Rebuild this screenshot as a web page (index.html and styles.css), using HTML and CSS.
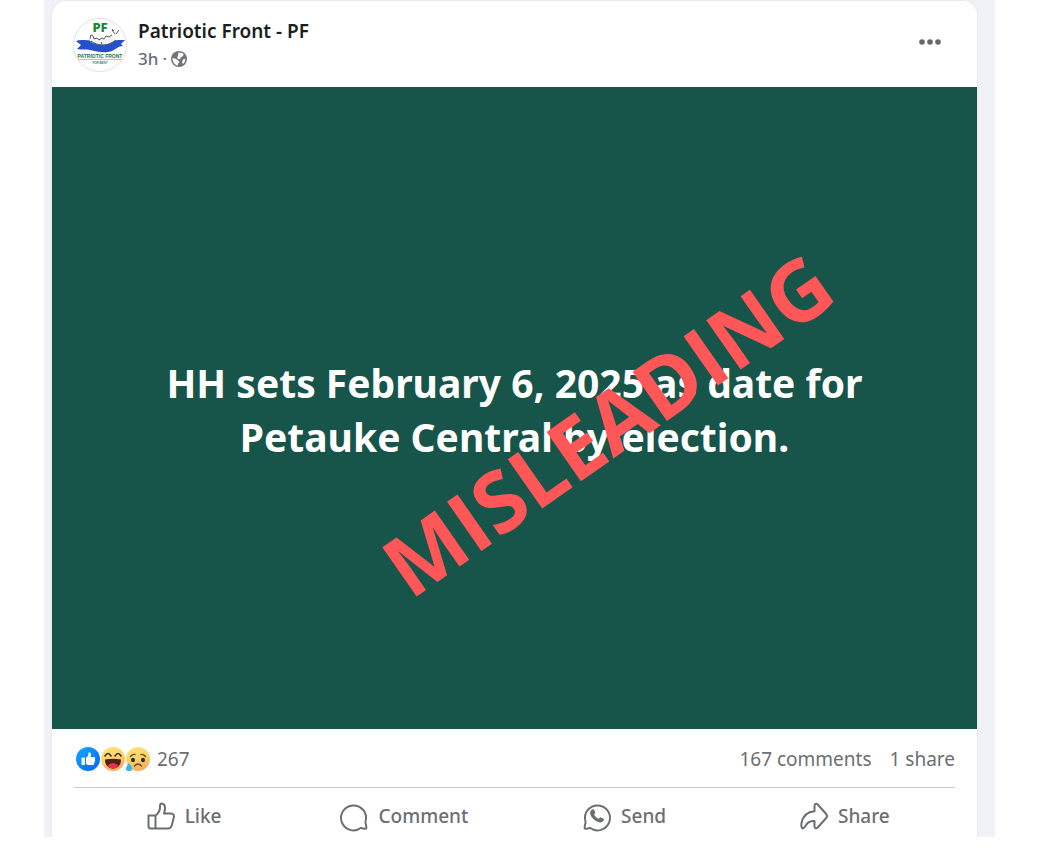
FILE: index.html
```html
<!DOCTYPE html>
<html lang="en">
<head>
<meta charset="utf-8">
<meta name="viewport" content="width=device-width, initial-scale=1">
<title>Patriotic Front - PF</title>
<link rel="stylesheet" href="styles.css">
</head>
<body>
<main class="feed">
  <article class="post">
    <header class="post-header">
      <svg class="avatar" viewBox="0 0 54 54" role="img" aria-label="Patriotic Front logo">
        <circle cx="27" cy="27" r="26.500" fill="#fff" stroke="#dedfe2"/>
        <text x="27" y="14" text-anchor="middle" class="logo-initials">PF</text>
        <path d="M3 23c5-2 10 0 15-1s10 2 17 1 10-1 17-1l-4 4 2 2c-6 0-8 5-15 6-8 1-12-1-18-2-4-1-8 0-13-1l4-4z" fill="#2450cc"/>
        <path d="M16 22c5 6 20 7 27-1l-3-3-7 3H20z" fill="#f3f3f4"/>
        <path d="M18 23c6 5 18 6 25-1M17 21l1-4 2 1 1 3 3-1 2 2 3-2 2 1 2-3 3 1 3-2M42 16l-3-4m4 4 3-4m-7-1 2 2M28 24l1 2" fill="none" stroke="#555963" stroke-width="1"/>
        <text x="27" y="40" text-anchor="middle" class="logo-name">PATRIOTIC FRONT</text>
        <path d="M5 41.500h44" stroke="#dcb5a8"/>
        <text x="27" y="46" text-anchor="middle" class="logo-motto">FOR BEST</text>
      </svg>
      <div class="byline">
        <a class="author" href="#">Patriotic Front - PF</a>
        <div class="meta"><a href="#">3h</a><span>·</span>
          <svg class="globe" viewBox="0 0 16 16" role="img" aria-label="Public">
            <circle cx="8" cy="8" r="8" fill="#707378"/>
            <path d="M7.500 1.500c2-.3 4 .5 5.200 1.800l-1.200 2.200-1.700.7-.6 1.800-1.700.3-1.300-1.600.8-2z" fill="#fff"/>
            <path d="M1.500 7l3 .8 2.800 1.800 1 1.800-1.300 1.300-.2 1.700C3.800 14 1.300 11 1.500 7zM12 8.500l2.300-.8c.2 2-.7 4-2.300 5.300l-1-2z" fill="#fff"/>
          </svg>
        </div>
      </div>
      <button class="more" type="button" aria-label="More options">
        <svg viewBox="0 0 24 24" aria-hidden="true"><circle cx="4" cy="12" r="2.800"/><circle cx="12" cy="12" r="2.800"/><circle cx="20" cy="12" r="2.800"/></svg>
      </button>
    </header>
    <section class="banner">
      <p class="headline">HH sets February 6, 2025 as date for Petauke Central by-election.</p>
      <strong class="stamp">MISLEADING</strong>
    </section>
    <footer class="post-footer">
      <div class="stats">
        <div class="reactions">
          <svg class="emoji" viewBox="0 0 24 24" role="img" aria-label="Like">
            <defs>
              <linearGradient id="blue" x1="0" y1="0" x2="1" y2="1"><stop stop-color="#16aafd"/><stop offset="1" stop-color="#0563f4"/></linearGradient>
              <linearGradient id="yellow" x1="0.300" y1="0" x2="0.700" y2="1"><stop stop-color="#fde275"/><stop offset=".5" stop-color="#fbd26b"/><stop offset="1" stop-color="#f5a55c"/></linearGradient>
            </defs>
            <circle cx="12" cy="12" r="12" fill="url(#blue)"/>
            <rect x="5.500" y="10.500" width="3.500" height="7.500" rx="1" fill="#fff"/>
            <path d="M10 11c1.500-1 2.500-3 2.500-5 0-1.300 2.500-1 2.500 1.500 0 1-.4 2-.6 2.500h3.600c1.200 0 1.500 1.400.7 2 .8.700.6 1.800-.2 2.200.5.800.2 1.600-.6 2 .3 1-.3 1.900-1.400 1.900H12l-2-1z" fill="#fff"/>
          </svg>
          <svg class="emoji" viewBox="0 0 24 24" role="img" aria-label="Haha">
            <circle cx="12" cy="12" r="12" fill="url(#yellow)"/>
            <path d="M4 9q3-5 6 0M14 9q3-5 6 0" fill="none" stroke="#3b2a1c" stroke-width="1.500" stroke-linecap="round"/>
            <path d="M4 12.500q8-1.500 16 0c0 6-3.500 9-8 9s-8-3-8-9" fill="#4b2119"/>
            <path d="M6.500 18.500q5.500-5 11 0c-1.500 2-3.300 3-5.500 3s-4-1-5.500-3" fill="#f02e4d"/>
          </svg>
          <svg class="emoji" viewBox="0 0 24 24" role="img" aria-label="Sad">
            <circle cx="12" cy="12" r="12" fill="url(#yellow)"/>
            <path d="M4.500 9.500q2-2.500 4.500-2M15 7.500q2.500-.5 4.500 2M8.500 19q3.500-4 7 0" fill="none" stroke="#6b4a20" stroke-width="1.400" stroke-linecap="round"/>
            <ellipse cx="7" cy="13" rx="2" ry="2.300" fill="#2f2b2a"/><ellipse cx="17" cy="13" rx="2" ry="2.300" fill="#2f2b2a"/>
            <path d="M3 16c2 2.500 3 4 3 5.500a3 3 0 0 1-6 0C0 20 1 18.500 3 16" fill="#35b5ef"/>
          </svg>
          <span class="count">267</span>
        </div>
        <div class="totals"><a href="#">167 comments</a><a href="#">1 share</a></div>
      </div>
      <div class="actions">
        <button type="button"><svg class="icon" viewBox="0 0 28 28" aria-hidden="true"><path d="M1.500 13.500h7V26.500H3.500q-2 0-2-2zM8.500 13.500c3-2 4.500-5 4.500-8.500V3.500C13 .5 18 .8 18 6c0 2-.5 4-1 5.500h7c2.500 0 3.500 2 2.800 4L25 22.500c-.7 2.800-1.800 4-4 4H8.500"/></svg>Like</button>
        <button type="button"><svg class="icon" viewBox="0 0 28 28" aria-hidden="true"><path d="M26.300 26.500c-1.800.3-3.600.1-5.200-.7A12.500 12.500 0 1 1 25.600 19c-.5 1.500.2 3.800.7 5.500z"/></svg>Comment</button>
        <button type="button"><svg class="icon" viewBox="0 0 28 28" aria-hidden="true"><path d="M1.700 26.500c1.800.3 3.600.1 5.200-.7A12.500 12.500 0 1 0 2.400 19c.5 1.500-.2 3.800-.7 5.500z"/><path class="solid" d="M8.500 8c1.500-1.300 2.500-.8 3 .6l.8 2.200-1.200 1.800c1 2 2.300 3.300 4.400 4.200l1.800-1.500 2.900 1.300c1 .5 1 1.500.2 2.500-2 2-4.500 1.700-7.800-.3-2.800-1.800-5-4.500-5.400-7C7 10 7.300 8.900 8.500 8z"/></svg>Send</button>
        <button type="button"><svg class="icon" viewBox="0 0 28 28" aria-hidden="true"><path d="M14.500 4c0-2.300 1.800-2.800 3.200-1.500l8.500 9.500q1.600 2 0 4l-8.500 9.500c-1.400 1.500-3.200.8-3.200-1.200V19c-3.500-.2-6 .6-8 3.300-1 1.400-2 3.500-3.300 4C1.500 26.800 1 23.500 1.500 21 3 13.500 7 9.800 14.500 9.300z"/></svg>Share</button>
      </div>
    </footer>
  </article>
</main>
</body>
</html>
```
FILE: styles.css
```css
* { box-sizing: border-box; }
body {
  margin: 0;
  background: #fff;
  color: #6b6e73;
  font-family: "Noto Sans", "Open Sans", sans-serif;
  font-size: 19px;
  line-height: 27px;
}
a { color: inherit; text-decoration: none; }
button { border: 0; padding: 0; background: none; color: inherit; font: inherit; cursor: pointer; }
.feed { margin: 0 64px 0 44px; padding: 1px 18px 0 8px; background: #f1f2f7; }
.post { background: #fff; border-radius: 14px 14px 0 0; box-shadow: 0 0 2px #d5d7de; clip-path: inset(-2px -2px 0); }
.post-header { display: flex; align-items: flex-start; gap: 11px; padding: 17px 35px 15px 21px; }
.avatar { width: 54px; height: 54px; flex: none; }
.logo-initials { fill: #168535; font-size: 13px; font-weight: 800; }
.logo-name { fill: #237642; font-family: "Liberation Sans", sans-serif; font-size: 5px; font-weight: 700; }
.logo-motto { fill: #378551; font-family: "Liberation Sans", sans-serif; font-size: 3px; font-weight: 700; }
.byline { flex: 1; }
.author { display: block; color: #1c1e21; font-size: 19px; font-weight: 600; }
.meta { display: flex; align-items: center; gap: 4px; font-size: 17px; font-weight: 500; }
.globe { width: 16px; height: 16px; }
.more { display: grid; width: 24px; height: 48px; place-items: center; }
.more svg { width: 24px; height: 24px; fill: #65686c; }
.banner { position: relative; display: grid; min-height: 642px; padding: 4px 24px 0; place-items: center; background: #175449; }
.headline { max-width: 740px; margin: 0; color: #fff; font-size: 39px; font-weight: 700; line-height: 54px; text-align: center; }
.stamp { position: absolute; top: 52.500%; left: 60%; color: #ff5757; font-family: "Open Sans", sans-serif; font-size: 84px; font-weight: 700; line-height: 1; transform: translate(-50%, -50%) rotate(-35deg); }
.post-footer { padding: 0 22px; }
.stats { display: flex; align-items: center; justify-content: space-between; min-height: 59px; padding-top: 2px; border-bottom: 1px solid #c9ccd0; }
.reactions { display: flex; align-items: center; gap: 1px; padding-left: 2px; }
.emoji { width: 24px; height: 24px; }
.count { margin-left: 6px; }
.totals { display: flex; gap: 18px; }
.actions { display: grid; grid-template-columns: repeat(4, 1fr); padding: 14px 0 7px; }
.actions button { display: flex; align-items: center; justify-content: center; gap: 10px; font-weight: 500; }
.icon { width: 28px; height: 28px; overflow: visible; fill: none; stroke: #6b6e73; stroke-width: 2; stroke-linejoin: round; }
.solid { fill: #6b6e73; stroke: none; }
```
